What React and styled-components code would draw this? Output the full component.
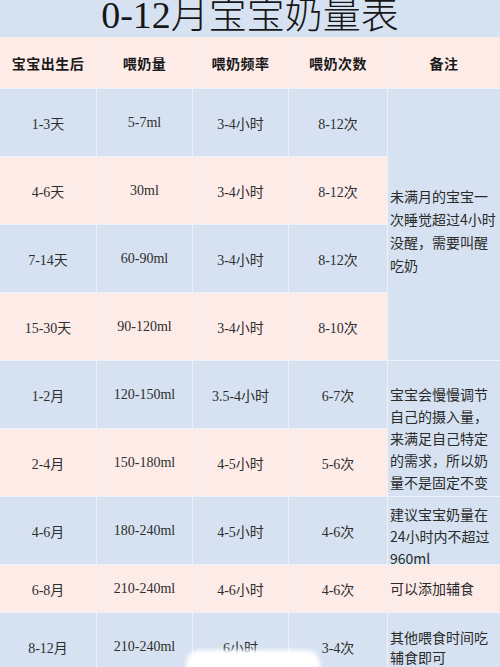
import React from 'react';
import styled, { createGlobalStyle } from 'styled-components';

const BLUE = '#d6e2f1';
const PINK = '#fdebe8';
const LINE = '#eef2f8';

const GlobalStyle = createGlobalStyle`
  html, body {
    margin: 0;
    padding: 0;
    background: ${BLUE};
    overflow: hidden;
  }
`;

const Page = styled.div`
  position: relative;
  width: 500px;
  height: 667px;
  overflow: hidden;
  background: ${BLUE};
`;

const Title = styled.div`
  height: 37px;
  overflow: hidden;
  text-align: center;
  font-family: "Liberation Serif", "Noto Sans CJK SC", serif;
  font-size: 38px;
  font-weight: 300;
  line-height: 31px;
  color: #161616;
`;

const Grid = styled.div`
  display: grid;
  grid-template-columns: 96px 95px 95px 98px 1fr;
  grid-template-rows: 51px repeat(7, 67px) 47px 67px;
  gap: 1px;
  background: ${LINE};
`;

const HeadCell = styled.div`
  background: ${PINK};
  display: flex;
  align-items: center;
  justify-content: center;
  font-family: "Noto Sans CJK SC", sans-serif;
  font-weight: 700;
  font-size: 14px;
  letter-spacing: 0.5px;
  color: #1a1a1a;
`;

const Cell = styled.div`
  background: ${(p) => (p.$pink ? PINK : BLUE)};
  display: flex;
  align-items: center;
  justify-content: center;
  font-family: "Liberation Serif", "Noto Sans CJK SC", serif;
  font-size: 14px;
  color: #2e2e2e;
  white-space: nowrap;
`;

// remark column: text starts at a set distance from the cell top
const Note = styled.div`
  background: ${(p) => (p.$pink ? PINK : BLUE)};
  grid-column: 5;
  grid-row: ${(p) => p.$rows};
  display: flex;
  flex-direction: column;
  justify-content: flex-start;
  padding: ${(p) => p.$pad}px 0 0 2px;
  font-family: "Noto Sans CJK SC", sans-serif;
  font-size: 14px;
  line-height: ${(p) => p.$lh}px;
  color: #2a2a2a;
  white-space: nowrap;
`;

const Smudge = styled.div`
  position: absolute;
  left: 186px;
  top: 650px;
  width: 134px;
  height: 30px;
  border-radius: 14px;
  background: #fff;
  filter: blur(2px);
`;

const headers = ['宝宝出生后', '喂奶量', '喂奶频率', '喂奶次数', '备注'];

const rows = [
  ['1-3天', '5-7ml', '3-4小时', '8-12次'],
  ['4-6天', '30ml', '3-4小时', '8-12次'],
  ['7-14天', '60-90ml', '3-4小时', '8-12次'],
  ['15-30天', '90-120ml', '3-4小时', '8-10次'],
  ['1-2月', '120-150ml', '3.5-4小时', '6-7次'],
  ['2-4月', '150-180ml', '4-5小时', '5-6次'],
  ['4-6月', '180-240ml', '4-5小时', '4-6次'],
  ['6-8月', '210-240ml', '4-6小时', '4-6次'],
  ['8-12月', '210-240ml', '6小时', '3-4次'],
];

const notes = [
  { rows: '2 / 6', pad: 96, lh: 23, lines: ['未满月的宝宝一', '次睡觉超过4小时', '没醒，需要叫醒', '吃奶'] },
  { rows: '6 / 8', pad: 22, lh: 22, lines: ['宝宝会慢慢调节', '自己的摄入量，', '来满足自己特定', '的需求，所以奶', '量不是固定不变'] },
  { rows: '8 / 9', pad: 6, lh: 22, lines: ['建议宝宝奶量在', '24小时内不超过', '960ml'] },
  { rows: '9 / 10', pad: 12, lh: 23, pink: true, lines: ['可以添加辅食'] },
  { rows: '10 / 11', pad: 14, lh: 20, lines: ['其他喂食时间吃', '辅食即可'] },
];

export default function App() {
  return (
    <Page>
      <GlobalStyle />
      <Title>0-12月宝宝奶量表</Title>
      <Grid>
        {headers.map((h) => (
          <HeadCell key={h}>{h}</HeadCell>
        ))}
        {rows.map((r, i) =>
          r.map((v, j) => (
            <Cell
              key={i + '-' + j}
              $pink={i % 2 === 1}
              style={{ gridRow: i + 2, gridColumn: j + 1 }}
            >
              {v}
            </Cell>
          ))
        )}
        {notes.map((n) => (
          <Note key={n.rows} $rows={n.rows} $pink={n.pink} $pad={n.pad} $lh={n.lh}>
            {n.lines.map((l) => (
              <span key={l}>{l}</span>
            ))}
          </Note>
        ))}
      </Grid>
      <Smudge />
    </Page>
  );
}
